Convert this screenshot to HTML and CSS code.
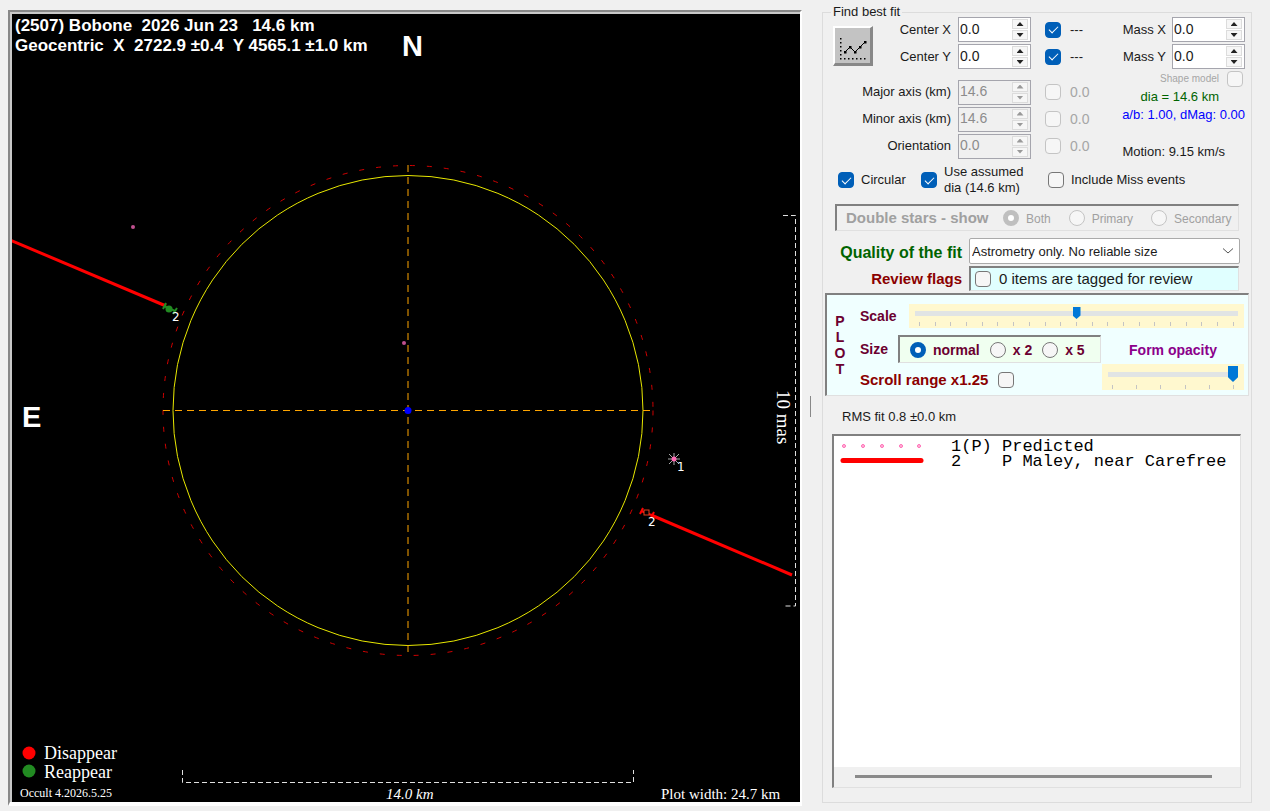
FILE: index.html
```
<!DOCTYPE html>
<html lang="en">
    <head>
        <meta charset="utf-8">
        <title>Occult - Plot of observations</title>
        <link rel="stylesheet" href="styles.css">
    </head>
    <body>
        <main class="plot">
            <svg class="plot-canvas" viewBox="12 14 788 788">
                <!-- chords -->
                <g class="chord">
                    <path d="M10 240 L166 306"/>
                    <path d="M651 515 L792 575"/>
                </g>
                <!-- asteroid outline and its uncertainty -->
                <circle class="limit" cx="408" cy="410.500" r="245"/>
                <circle class="outline" cx="408" cy="410.500" r="235"/>
                <path class="axis" d="M163 410.500 H654 M408 165 V657"/>
                <circle cx="408" cy="410.500" r="3.500" fill="#0000ff"/>
                <!-- predicted positions -->
                <g fill="#c0508f">
                    <circle cx="133" cy="227" r="2"/>
                    <circle cx="404" cy="343" r="2"/>
                </g>
                <path d="M668 459 H680 M674 453 V465 M669 454 L679 464 M679 454 L669 464" stroke="#a8a8a8"/>
                <circle cx="674" cy="459" r="2.500" fill="#ff69b4"/>
                <!-- reappear event -->
                <path d="M166 303 L163 309 M177 308 L173 314 M164 306 L175 311" stroke="#228b22" stroke-width="2"/>
                <circle cx="169" cy="309" r="3.500" fill="#228b22"/>
                <!-- disappear event -->
                <path d="M643 508 L640 514 M654 512 L651 518 M641 511 L654 516" stroke="#ff0000" stroke-width="2"/>
                <rect x="644" y="510" width="5" height="5" fill="#000" stroke="#e04020"/>
                <!-- scale bars -->
                <path class="scale-bar" d="M182.500 770 V782.500 H633.500 V770"/>
                <path class="scale-bar" d="M783 215.500 H795.500 V606 H783"/>
                <circle cx="29" cy="753" r="6.500" fill="#ff0000"/>
                <circle cx="29" cy="771" r="6.500" fill="#228b22"/>
                <g class="title">
                    <text x="15" y="31">(2507) Bobone  2026 Jun 23   14.6 km</text>
                    <text x="15" y="51">Geocentric  X  2722.9 ±0.4  Y 4565.1 ±1.0 km</text>
                </g>
                <g class="compass">
                    <text x="402" y="56">N</text>
                    <text x="22" y="427">E</text>
                </g>
                <g class="mark">
                    <text x="172" y="321">2</text>
                    <text x="648" y="526">2</text>
                    <text x="677" y="471">1</text>
                </g>
                <g class="serif">
                    <text class="key" x="44" y="759">Disappear</text>
                    <text class="key" x="44" y="778">Reappear</text>
                    <text class="version" x="20" y="797">Occult 4.2026.5.25</text>
                    <text class="length" x="386" y="799">14.0 km</text>
                    <text class="width" x="661" y="799">Plot width: 24.7 km</text>
                    <text class="mas" transform="translate(777 390) rotate(90)">10 mas</text>
                </g>
            </svg>
        </main>
        <div class="splitter"></div>
        <fieldset class="panel">
            <legend>Find best fit</legend>
            <div class="fit">
                <div class="fit-grid">
                    <button class="fit-button" aria-label="Find best fit">
                        <svg width="30" height="28" viewBox="0 0 30 28">
                            <path d="M2 6h1.500v1.500h-1.500z M2 10h1.500v1.500h-1.500z M2 14h1.500v1.500h-1.500z M2 18h1.500v1.500h-1.500z M2 22h1.500v1.500h-1.500z M6 26h1.500v1.500h-1.500z M2 26h1.500v1.500h-1.500z M10 26h1.500v1.500h-1.500z M14 26h1.500v1.500h-1.500z M18 26h1.500v1.500h-1.500z M22 26h1.500v1.500h-1.500z M26 26h1.500v1.500h-1.500z"/>
                            <path d="M7 20 L12 15 L17 20 L22 15 L27 10" fill="none" stroke="#000"/>
                            <path d="M6 19h2.500v2.500h-2.500z M11 14h2.500v2.500h-2.500z M16 19h2.500v2.500h-2.500z M21 14h2.500v2.500h-2.500z M26 9h2.500v2.500h-2.500z"/>
                        </svg>
                    </button>
                    <label class="top-label" for="centerX">Center X</label>
                    <span class="spin"><input type="text" id="centerX" value="0.0"><button aria-label="Up"></button><button aria-label="Down"></button></span>
                    <input type="checkbox" id="useX" checked>
                    <label for="useX">---</label>
                    <label class="top-label" for="centerY">Center Y</label>
                    <span class="spin"><input type="text" id="centerY" value="0.0"><button aria-label="Up"></button><button aria-label="Down"></button></span>
                    <input type="checkbox" id="useY" checked>
                    <label for="useY">---</label>
                </div>
                <div class="fit-grid">
                    <label for="major">Major axis (km)</label>
                    <span class="spin off"><input type="text" id="major" value="14.6" disabled><button disabled aria-label="Up"></button><button disabled aria-label="Down"></button></span>
                    <input type="checkbox" id="useMajor" disabled>
                    <label class="grey" for="useMajor">0.0</label>
                    <label for="minor">Minor axis (km)</label>
                    <span class="spin off"><input type="text" id="minor" value="14.6" disabled><button disabled aria-label="Up"></button><button disabled aria-label="Down"></button></span>
                    <input type="checkbox" id="useMinor" disabled>
                    <label class="grey" for="useMinor">0.0</label>
                    <label for="orientation">Orientation</label>
                    <span class="spin off"><input type="text" id="orientation" value="0.0" disabled><button disabled aria-label="Up"></button><button disabled aria-label="Down"></button></span>
                    <input type="checkbox" id="useOrientation" disabled>
                    <label class="grey" for="useOrientation">0.0</label>
                </div>
                <div class="mass">
                    <div class="mass-row">
                        <label for="massX">Mass X</label>
                        <span class="spin"><input type="text" id="massX" value="0.0"><button aria-label="Up"></button><button aria-label="Down"></button></span>
                    </div>
                    <div class="mass-row">
                        <label for="massY">Mass Y</label>
                        <span class="spin"><input type="text" id="massY" value="0.0"><button aria-label="Up"></button><button aria-label="Down"></button></span>
                    </div>
                    <div class="shape-row">
                        <label for="shape">Shape model</label>
                        <input type="checkbox" id="shape" disabled>
                    </div>
                    <div class="dia">dia = 14.6 km</div>
                    <div class="ratio">a/b: 1.00, dMag: 0.00</div>
                    <div class="motion">Motion: 9.15 km/s</div>
                </div>
            </div>
            <div class="options">
                <input type="checkbox" id="circular" checked>
                <label class="circular" for="circular">Circular</label>
                <input type="checkbox" id="assumed" checked>
                <label class="assumed" for="assumed">Use assumed<br>dia (14.6 km)</label>
                <input type="checkbox" id="miss">
                <label for="miss">Include Miss events</label>
            </div>
            <div class="double sunken">
                <span class="double-title">Double stars - show</span>
                <input type="radio" name="double" id="both" checked disabled>
                <label for="both">Both</label>
                <input type="radio" name="double" id="primary" disabled>
                <label for="primary">Primary</label>
                <input type="radio" name="double" id="secondary" disabled>
                <label for="secondary">Secondary</label>
            </div>
            <div class="quality">
                <label class="green" for="quality">Quality of the fit</label>
                <div class="select-box">
                    <select id="quality">
                        <option>Astrometry only. No reliable size</option>
                    </select>
                    <svg width="12" height="8" viewBox="0 0 12 8"><path d="M1 1.500 L6 6 L11 1.500" fill="none" stroke="#555"/></svg>
                </div>
                <span class="red">Review flags</span>
                <div class="review sunken">
                    <input type="checkbox" id="review">
                    <label for="review">0 items are tagged for review</label>
                </div>
            </div>
            <div class="plot-box sunken">
                <div class="plot-word"><span>P</span><span>L</span><span>O</span><span>T</span></div>
                <div class="plot-rows">
                    <div class="scale-row">
                        <label for="scale">Scale</label>
                        <div class="track">
                            <input type="range" id="scale" min="0" max="20" value="10">
                            <div class="ticks"><i></i><i></i><i></i><i></i><i></i><i></i><i></i><i></i><i></i><i></i><i></i><i></i><i></i><i></i><i></i><i></i><i></i><i></i><i></i><i></i><i></i></div>
                        </div>
                    </div>
                    <div class="lower">
                        <div class="size-part">
                            <div class="size-row">
                                <span class="size-label">Size</span>
                                <div class="sizes sunken">
                                    <input type="radio" name="size" id="normal" checked>
                                    <label for="normal">normal</label>
                                    <input type="radio" name="size" id="x2">
                                    <label for="x2">x 2</label>
                                    <input type="radio" name="size" id="x5">
                                    <label for="x5">x 5</label>
                                </div>
                            </div>
                            <div class="scroll-row">
                                <label for="scroll">Scroll range x1.25</label>
                                <input type="checkbox" id="scroll">
                            </div>
                        </div>
                        <div class="opacity-part">
                            <label for="opacity">Form opacity</label>
                            <div class="track big">
                                <input type="range" id="opacity" min="0" max="5" value="5">
                                <div class="ticks"><i></i><i></i><i></i><i></i><i></i><i></i></div>
                            </div>
                        </div>
                    </div>
                </div>
            </div>
            <div class="rms">RMS fit 0.8 ±0.0 km</div>
            <div class="list sunken">
                <div class="list-rows">
                    <svg width="84" height="30" viewBox="0 0 84 30">
                        <g fill="#ffc0dd" stroke="#ff69b4">
                            <circle cx="4" cy="7" r="1.500"/>
                            <circle cx="23" cy="7" r="1.500"/>
                            <circle cx="42" cy="7" r="1.500"/>
                            <circle cx="61" cy="7" r="1.500"/>
                            <circle cx="79" cy="7" r="1.500"/>
                        </g>
                        <path d="M3 21.500 H81" stroke="#ff0000" stroke-width="5" stroke-linecap="round"/>
                    </svg>
                    <pre>1(P) Predicted
2    P Maley, near Carefree</pre>
                </div>
                <div class="scrollbar"><div class="scroll-thumb"></div></div>
            </div>
        </fieldset>
    </body>
</html>
```
FILE: styles.css
```
* {
    box-sizing: border-box;
}
body {
    margin: 0;
    padding: 7px 18px 5px 8px;
    height: 100vh;
    display: flex;
    background-color: #f0f0f0;
    font-family: "Liberation Sans", Arial, sans-serif;
    font-size: 13px;
    line-height: 16px;
    color: #1a1a1a;
}
input, button, select {
    margin: 0;
    padding: 0;
    font-family: inherit;
    font-size: 13px;
    color: inherit;
}

/* plot */
.plot {
    flex: 1;
    min-width: 0;
    margin-top: 3px;
    padding: 2px 0 0 2px;
    border: 2px solid #888;
    border-right-color: #fff;
    border-bottom: 4px solid #fff;
    background-color: #c8c8c8;
}
.plot-canvas {
    display: block;
    width: 100%;
    height: 100%;
    background-color: #000;
}
.plot-canvas text {
    fill: #fff;
    white-space: pre;
}
.chord {
    stroke: #ff0000;
    stroke-width: 3;
}
.limit {
    fill: none;
    stroke: #d00000;
    stroke-dasharray: 5 12;
}
.outline {
    fill: none;
    stroke: #e8e800;
}
.axis {
    stroke: #ffa500;
    stroke-dasharray: 7 5;
}
.scale-bar {
    fill: none;
    stroke: #e0e0e0;
    stroke-dasharray: 5 3;
}
.title {
    font-size: 17px;
    font-weight: bold;
}
.compass {
    font-size: 29px;
    font-weight: bold;
}
.mark {
    font-family: "DejaVu Sans", sans-serif;
    font-size: 12px;
}
.serif {
    font-family: "Liberation Serif", serif;
}
.key {
    font-size: 18px;
}
.version {
    font-size: 12px;
}
.length {
    font-size: 15px;
    font-style: italic;
}
.width {
    font-size: 15px;
}
.mas {
    font-size: 19px;
}
.splitter {
    width: 1px;
    height: 21px;
    margin: 0 11px 0 8px;
    align-self: center;
    background-color: #888;
}

/* right panel */
.panel {
    display: flex;
    flex-direction: column;
    width: 430px;
    margin: 0 0 3px;
    padding: 0 2px 14px 2px;
    border: 1px solid #dcdcdc;
}
.panel legend {
    margin-left: 6px;
    padding: 0 2px;
    line-height: 10px;
}
.fit {
    display: grid;
    grid-template-columns: 272px 1fr;
    row-gap: 9px;
    padding: 0 4px 0 8px;
}
.fit-grid {
    display: grid;
    grid-template-columns: 40px 85px 73px 17px 1fr;
    grid-auto-rows: 25px;
    row-gap: 2px;
    align-items: center;
    text-align: right;
}
.fit-grid label {
    grid-column: 1 / 3;
    padding-right: 7px;
}
.fit-grid .top-label {
    grid-column: 2;
}
.fit-grid input[type="checkbox"] {
    margin-left: 14px;
}
.fit-grid input + label {
    grid-column: 5;
    padding: 0 0 0 22px;
    text-align: left;
}
.fit-button {
    grid-row: 1 / 3;
    display: flex;
    align-items: center;
    justify-content: center;
    width: 40px;
    height: 40px;
    margin-top: 6px;
    background-color: #c3c3c3;
    border: 2px solid #fff;
    border-right: 3px solid #888;
    border-bottom: 3px solid #888;
}
.spin {
    display: grid;
    grid-template-columns: 1fr 16px;
    grid-template-rows: 1fr 1fr;
    gap: 1px 0;
    width: 73px;
    height: 25px;
    padding: 1px 2px 1px 1px;
    border: 1px solid #a5a5ad;
    background-color: #fff;
}
.spin input {
    grid-row: 1 / 3;
    width: 100%;
    height: 19px;
    border: none;
    background: none;
    font-size: 14px;
}
.spin button {
    display: flex;
    align-items: center;
    justify-content: center;
    background-color: #f6f6f6;
    border: 1px solid #dcdcdc;
}
.spin button::before {
    content: "";
    width: 7px;
    height: 4px;
    background-color: #222;
    clip-path: polygon(50% 0, 100% 100%, 0 100%);
}
.spin button:last-child::before {
    clip-path: polygon(0 0, 100% 0, 50% 100%);
}
.spin.off {
    background-color: #f0f0f0;
    color: #8c8c8c;
}
.spin.off button::before {
    background-color: #999;
}
.grey {
    color: #a6a6a6;
    font-size: 14px;
}
input[type="checkbox"], input[type="radio"] {
    appearance: none;
    flex: none;
    display: grid;
    place-items: center;
    width: 16px;
    height: 16px;
    border: 1px solid #777;
    border-radius: 4px;
    background-color: #f6f6f6;
}
input[type="checkbox"]:checked {
    border-color: #005fb8;
    background-color: #005fb8;
}
input[type="checkbox"]:checked::before {
    content: "";
    width: 8px;
    height: 4px;
    margin-top: -2px;
    border-left: 1px solid #fff;
    border-bottom: 1px solid #fff;
    transform: rotate(-45deg);
}
input[type="checkbox"]:disabled, input[type="radio"]:disabled {
    border-color: #c4c4c4;
}
input[type="radio"] {
    border-radius: 50%;
}
input[type="radio"]:checked {
    border: 5px solid #005fb8;
    background-color: #fff;
}
input[type="radio"]:checked:disabled {
    border-color: #bfbfbf;
}
.mass {
    grid-column: 2;
    grid-row: 1 / 3;
}
.mass-row {
    display: flex;
    align-items: center;
    justify-content: flex-end;
    gap: 6px;
    height: 25px;
    margin-bottom: 2px;
}
.shape-row {
    display: flex;
    align-items: center;
    justify-content: flex-end;
    gap: 8px;
    height: 16px;
    padding-right: 2px;
    margin-bottom: 1px;
    font-size: 10px;
    color: #a6a6a6;
}
.dia {
    padding-right: 26px;
    line-height: 18px;
    color: #006400;
    text-align: right;
}
.ratio {
    line-height: 18px;
    color: #0000ff;
    text-align: right;
    white-space: nowrap;
}
.motion {
    margin-top: 20px;
    padding-right: 20px;
    text-align: right;
}
.options {
    display: flex;
    align-items: center;
    margin: 4px 0 8px;
    padding-left: 13px;
    height: 32px;
}
.options label {
    margin-left: 7px;
}
.circular {
    width: 60px;
}
.assumed {
    width: 104px;
}
.sunken {
    border: 2px solid #808080;
    border-right: 1px solid #e0e0e0;
    border-bottom: 1px solid #e0e0e0;
}
.double {
    display: flex;
    align-items: center;
    height: 27px;
    margin: 0 10px 7px 10px;
    padding-left: 9px;
    color: #a0a0a0;
    font-size: 12px;
}
.double-title {
    width: 157px;
    font-size: 15px;
    font-weight: bold;
}
.double label {
    margin: 2px 18px 0 7px;
}
.double label:last-child {
    margin-right: 0;
}
.quality {
    display: grid;
    grid-template-columns: 1fr 271px;
    grid-template-rows: 26px 25px;
    gap: 2px 7px;
    align-items: center;
    margin: 0 9px 2px 8px;
    font-weight: bold;
    text-align: right;
}
.green {
    padding-top: 4px;
    font-size: 16px;
    color: #006400;
    white-space: nowrap;
}
.red {
    font-size: 15px;
    color: #8b0000;
}
.select-box {
    display: flex;
    align-items: center;
    height: 26px;
    padding-right: 5px;
    border: 1px solid #aaa;
    border-radius: 2px;
    background-color: #fff;
}
.select-box select {
    flex: 1;
    appearance: none;
    border: none;
    background: none;
    padding-left: 2px;
}
.review {
    display: flex;
    align-items: center;
    gap: 8px;
    height: 25px;
    margin-right: 1px;
    padding-left: 4px;
    background-color: #e0ffff;
    font-size: 15px;
    font-weight: normal;
}

/* plot settings */
.plot-box {
    display: flex;
    height: 103px;
    background-color: #f0ffff;
    color: #6b0030;
    font-size: 14px;
    font-weight: bold;
}
.plot-word {
    display: flex;
    flex-direction: column;
    width: 26px;
    padding-top: 18px;
    text-align: center;
}
.plot-rows {
    flex: 1;
    padding: 9px 4px 0 7px;
}
.scale-row {
    display: flex;
    align-items: center;
    justify-content: space-between;
}
.track {
    width: 335px;
    height: 24px;
    padding: 3px 6px 0;
    background-color: #fff8cf;
}
.track input {
    appearance: none;
    display: block;
    width: 100%;
    height: 12px;
    background: linear-gradient(#e1e4e4, #e1e4e4) center / 100% 5px no-repeat;
}
.track input::-webkit-slider-thumb {
    appearance: none;
    width: 8px;
    height: 12px;
    background-color: #0078d7;
    clip-path: polygon(0 0, 100% 0, 100% 70%, 50% 100%, 0 70%);
}
.ticks {
    display: flex;
    justify-content: space-between;
    padding: 3px 4px 0;
}
.ticks i {
    width: 1px;
    height: 4px;
    background-color: #c4c4c4;
}
.big {
    width: 142px;
    height: 26px;
    padding-top: 2px;
}
.big input {
    height: 16px;
}
.big input::-webkit-slider-thumb {
    width: 10px;
    height: 16px;
}
.lower {
    display: flex;
    justify-content: space-between;
    padding-top: 7px;
}
.size-row {
    display: flex;
    align-items: center;
    gap: 10px;
}
.sizes {
    display: flex;
    align-items: center;
    width: 203px;
    height: 28px;
    padding-left: 10px;
    background-color: #f0fff0;
}
.sizes label {
    margin: 0 10px 0 7px;
}
.scroll-row {
    display: flex;
    align-items: center;
    gap: 10px;
    padding-top: 9px;
    font-size: 15px;
    color: #8b0000;
}
.opacity-part {
    display: flex;
    flex-direction: column;
    align-items: center;
    gap: 6px;
    padding-top: 7px;
    color: #8b008b;
}

/* results */
.rms {
    padding: 13px 17px 9px;
}
.list {
    flex: 1;
    display: flex;
    flex-direction: column;
    margin: 0 8px 0 7px;
    background-color: #fff;
}
.list-rows {
    flex: 1;
    display: flex;
    gap: 27px;
    padding: 3px 0 0 6px;
}
.list-rows pre {
    margin: 0;
    font-family: "Liberation Mono", monospace;
    font-size: 17px;
    line-height: 15px;
    color: #000;
}
.scrollbar {
    padding: 8px 28px 9px 21px;
    background-color: #f0f0f0;
}
.scroll-thumb {
    height: 3px;
    background-color: #8a8a8a;
}
```
